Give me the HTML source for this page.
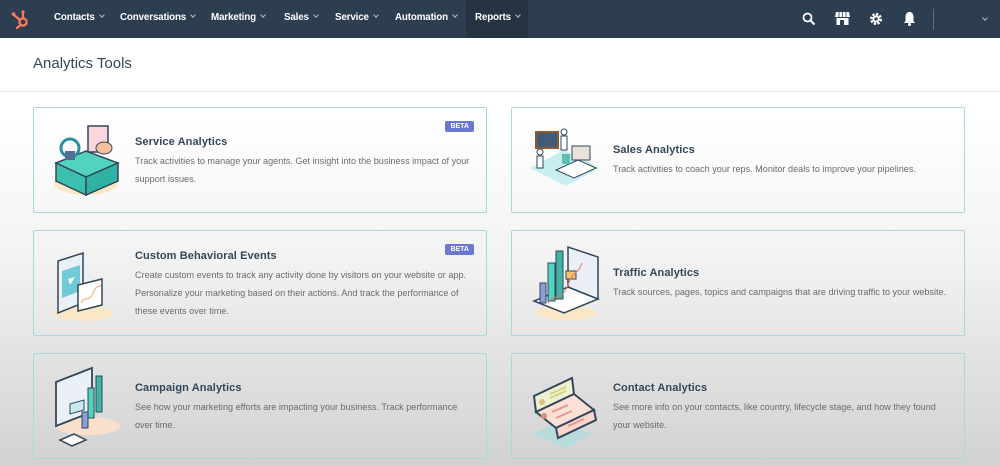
<!DOCTYPE html>
<html><head><meta charset="utf-8"><style>
*{margin:0;padding:0;box-sizing:border-box}
body{width:1000px;height:466px;overflow:hidden;font-family:"Liberation Sans",sans-serif;background:linear-gradient(#fff 0px,#fff 120px,#f2f2f2 260px,#e2e2e2 360px,#d2d2d2 466px);position:relative}
.nav{position:absolute;left:0;top:0;width:1000px;height:38px;background:#2d3e50;color:#fff;font-size:9.8px;font-weight:bold;letter-spacing:-.15px}
.nav .it{position:absolute;top:12px}
.nav .it:after{content:"";display:inline-block;width:3px;height:3px;border-right:1px solid #b0bcc8;border-bottom:1px solid #b0bcc8;transform:rotate(45deg);margin-left:5px;position:relative;top:-3px}
.rep{position:absolute;left:466px;top:0;width:62px;height:38px;background:#253342}
.head{position:absolute;left:0;top:38px;width:1000px;height:54px;background:#fff;border-bottom:1px solid #dfe3eb}
.head h1{position:absolute;left:33px;top:17px;font-size:15px;font-weight:normal;color:#33475b}
.card{position:absolute;width:454px;height:106px;border:1px solid #a9d7da;border-radius:2px}
.card h2{position:absolute;left:101px;font-size:11px;color:#33475b;font-weight:bold;letter-spacing:.1px}
.card p{position:absolute;left:101px;width:342px;font-size:9.1px;line-height:18px;color:#666c72}
.beta{position:absolute;right:12px;top:13px;background:#6a78d1;color:#fff;font-size:7px;font-weight:bold;padding:2px 5px;border-radius:2px}
.ill{position:absolute;left:14px;top:10px}
</style></head><body>
<div class="nav">
<div class="rep"></div>
<svg style="position:absolute;left:10px;top:8px" width="22" height="22" viewBox="0 0 22 22"><g stroke="#ff7a59" stroke-width="2.2" fill="none" stroke-linecap="round"><circle cx="13" cy="14" r="3.6"/><line x1="13" y1="10" x2="13" y2="5"/><line x1="10" y1="12" x2="4" y2="7"/><line x1="10.5" y1="17" x2="7" y2="20"/></g><circle cx="13" cy="4" r="1.6" fill="#ff7a59"/><circle cx="3.5" cy="6" r="1.8" fill="#ff7a59"/></svg>
<span class="it" style="left:54px">Contacts</span>
<span class="it" style="left:120px">Conversations</span>
<span class="it" style="left:211px">Marketing</span>
<span class="it" style="left:284px">Sales</span>
<span class="it" style="left:335px">Service</span>
<span class="it" style="left:395px">Automation</span>
<span class="it" style="left:475px">Reports</span>
<svg style="position:absolute;left:802px;top:12px" width="14" height="14" viewBox="0 0 14 14"><circle cx="5.5" cy="5.5" r="4" stroke="#fff" stroke-width="1.8" fill="none"/><line x1="8.5" y1="8.5" x2="12.5" y2="12.5" stroke="#fff" stroke-width="2"/></svg>
<svg style="position:absolute;left:835px;top:11px" width="15" height="15" viewBox="0 0 15 15"><path d="M1 1h13l1 5H0z" fill="#fff"/><rect x="1.5" y="7" width="12" height="7" fill="#fff"/><rect x="5" y="9" width="4" height="5" fill="#2d3e50"/><path d="M4 1v5M7.5 1v5M11 1v5" stroke="#2d3e50" stroke-width=".8"/></svg>
<svg style="position:absolute;left:869px;top:12px" width="14" height="14" viewBox="0 0 14 14"><circle cx="7" cy="7" r="4.5" stroke="#fff" stroke-width="3" stroke-dasharray="2.2 1.3" fill="none"/><circle cx="7" cy="7" r="3.5" fill="#fff"/><circle cx="7" cy="7" r="1.6" fill="#2d3e50"/></svg>
<svg style="position:absolute;left:903px;top:11px" width="13" height="15" viewBox="0 0 13 15"><path d="M6.5 1C3.5 1 2.5 3.5 2.5 6v4L1 12h11l-1.5-2V6C10.5 3.5 9.5 1 6.5 1z" fill="#fff"/><circle cx="6.5" cy="13.5" r="1.5" fill="#fff"/></svg>
<div style="position:absolute;left:933px;top:9px;width:1px;height:21px;background:#516f90"></div>
<span style="position:absolute;left:983px;top:16px;width:4px;height:4px;border-right:1px solid #b0bcc8;border-bottom:1px solid #b0bcc8;transform:rotate(45deg)"></span>
</div>
<div class="head"><h1>Analytics Tools</h1></div>

<div class="card" style="left:33px;top:107px">
<svg class="ill" width="80" height="85" viewBox="0 0 80 85"><ellipse cx="38" cy="65" rx="32" ry="12" fill="#fbe6c6"/><path d="M8 45l30-12 32 12-32 14z" fill="#51d3c0" stroke="#33475b" stroke-width="1.5"/><path d="M8 45v18l30 14V59z" fill="#3bbfae" stroke="#33475b" stroke-width="1.5"/><path d="M38 59v18l32-14V45z" fill="#2fb2a3" stroke="#33475b" stroke-width="1.5"/><rect x="40" y="8" width="20" height="26" fill="#fcd5dd" stroke="#33475b" stroke-width="1.5"/><ellipse cx="56" cy="30" rx="8" ry="6" fill="#f5c09a" stroke="#33475b"/><circle cx="22" cy="30" r="9" fill="none" stroke="#2d8ea3" stroke-width="3"/><rect x="17" y="33" width="10" height="9" fill="#516f90"/></svg>
<h2 style="top:28px">Service Analytics</h2><span class="beta">BETA</span>
<p style="top:44px">Track activities to manage your agents. Get insight into the business impact of your support issues.</p></div>

<div class="card" style="left:511px;top:107px">
<svg class="ill" width="80" height="85" viewBox="0 0 80 85"><path d="M4 50l34-18 36 18-34 18z" fill="#c8eef0"/><rect x="10" y="14" width="22" height="16" fill="#425b76" stroke="#8b5a32" stroke-width="2"/><circle cx="38" cy="14" r="3" fill="#fff" stroke="#33475b"/><rect x="35" y="18" width="6" height="14" fill="#fff" stroke="#33475b"/><circle cx="14" cy="34" r="3" fill="#fff" stroke="#33475b"/><rect x="11" y="38" width="6" height="12" fill="#fff" stroke="#33475b"/><path d="M30 52l22-10 18 8-22 10z" fill="#fff" stroke="#33475b"/><rect x="46" y="28" width="18" height="14" fill="#e8e2d8" stroke="#33475b"/><rect x="36" y="36" width="8" height="10" fill="#5bc0b0"/></svg>
<h2 style="top:36px">Sales Analytics</h2>
<p style="top:52px">Track activities to coach your reps. Monitor deals to improve your pipelines.</p></div>

<div class="card" style="left:33px;top:230px">
<svg class="ill" width="80" height="85" viewBox="0 0 80 85"><ellipse cx="35" cy="72" rx="30" ry="8" fill="#fbe6c6"/><path d="M10 20l25-8v50l-25 10z" fill="#eaf0f6" stroke="#33475b" stroke-width="1.5"/><path d="M14 30l18-6v26l-18 7z" fill="#6fc9d6"/><path d="M20 38l7-2-5 8z" fill="#fff"/><path d="M30 44l24-6v26l-24 6z" fill="#fff" stroke="#33475b" stroke-width="1.5"/><path d="M33 62c4-8 8 0 12-10s6-4 8-8" stroke="#f2a36e" fill="none"/></svg>
<h2 style="top:19px">Custom Behavioral Events</h2><span class="beta">BETA</span>
<p style="top:35px">Create custom events to track any activity done by visitors on your website or app. Personalize your marketing based on their actions. And track the performance of these events over time.</p></div>

<div class="card" style="left:511px;top:230px">
<svg class="ill" width="80" height="85" viewBox="0 0 80 85"><ellipse cx="40" cy="72" rx="30" ry="7" fill="#fbe6c6"/><path d="M8 60l30 12 34-14-30-12z" fill="#fff" stroke="#33475b" stroke-width="1.5"/><path d="M42 46V6l30 10v42z" fill="#eaf0f6" stroke="#33475b" stroke-width="1.5"/><rect x="30" y="10" width="7" height="48" fill="#3fb3a5" stroke="#33475b"/><rect x="22" y="22" width="7" height="38" fill="#51d3c0" stroke="#33475b"/><rect x="14" y="42" width="6" height="20" fill="#8e9bd9" stroke="#33475b"/><rect x="40" y="30" width="10" height="8" fill="#f5c26b" stroke="#33475b"/><path d="M22 62c8-10 14-2 20-18s10-10 14-22" stroke="#e8706a" fill="none"/></svg>
<h2 style="top:36px">Traffic Analytics</h2>
<p style="top:52px">Track sources, pages, topics and campaigns that are driving traffic to your website.</p></div>

<div class="card" style="left:33px;top:353px">
<svg class="ill" width="80" height="85" viewBox="0 0 80 85"><ellipse cx="40" cy="62" rx="32" ry="9" fill="#fbe0cc"/><path d="M8 18l36-14v44L8 62z" fill="#eaf0f6" stroke="#33475b" stroke-width="1.8"/><path d="M22 40l14-4v10l-14 4z" fill="#c8eaf0" stroke="#33475b"/><rect x="40" y="24" width="6" height="30" fill="#51d3c0" stroke="#33475b"/><rect x="48" y="12" width="6" height="36" fill="#3fb3a5" stroke="#33475b"/><rect x="34" y="48" width="6" height="16" fill="#8e9bd9" stroke="#33475b"/><path d="M12 76l14-6 12 6-14 6z" fill="#fff" stroke="#33475b" stroke-width="1.5"/></svg>
<h2 style="top:28px">Campaign Analytics</h2>
<p style="top:44px">See how your marketing efforts are impacting your business. Track performance over time.</p></div>

<div class="card" style="left:511px;top:353px">
<svg class="ill" width="80" height="85" viewBox="0 0 80 85"><path d="M6 70l26-12 34 12-26 14z" fill="#b8dcdc"/><path d="M8 32l38-18 2 16-38 18z" fill="#eef0d2" stroke="#33475b" stroke-width="2"/><path d="M10 48l38-18 20 16-38 18z" fill="#fce0d8" stroke="#33475b" stroke-width="2"/><path d="M30 64l38-18 2 10-38 18z" fill="#fcd5cc" stroke="#33475b" stroke-width="2"/><path d="M24 30l16-7M24 34l16-7" stroke="#d8d080" stroke-width="2"/><path d="M26 48l16-7M30 54l16-7M42 62l16-7" stroke="#e49a8a" stroke-width="2"/><circle cx="16" cy="38" r="3" fill="#e0c080"/><circle cx="18" cy="52" r="3" fill="#d4907a"/></svg>
<h2 style="top:28px">Contact Analytics</h2>
<p style="top:44px">See more info on your contacts, like country, lifecycle stage, and how they found your website.</p></div>
</body></html>
